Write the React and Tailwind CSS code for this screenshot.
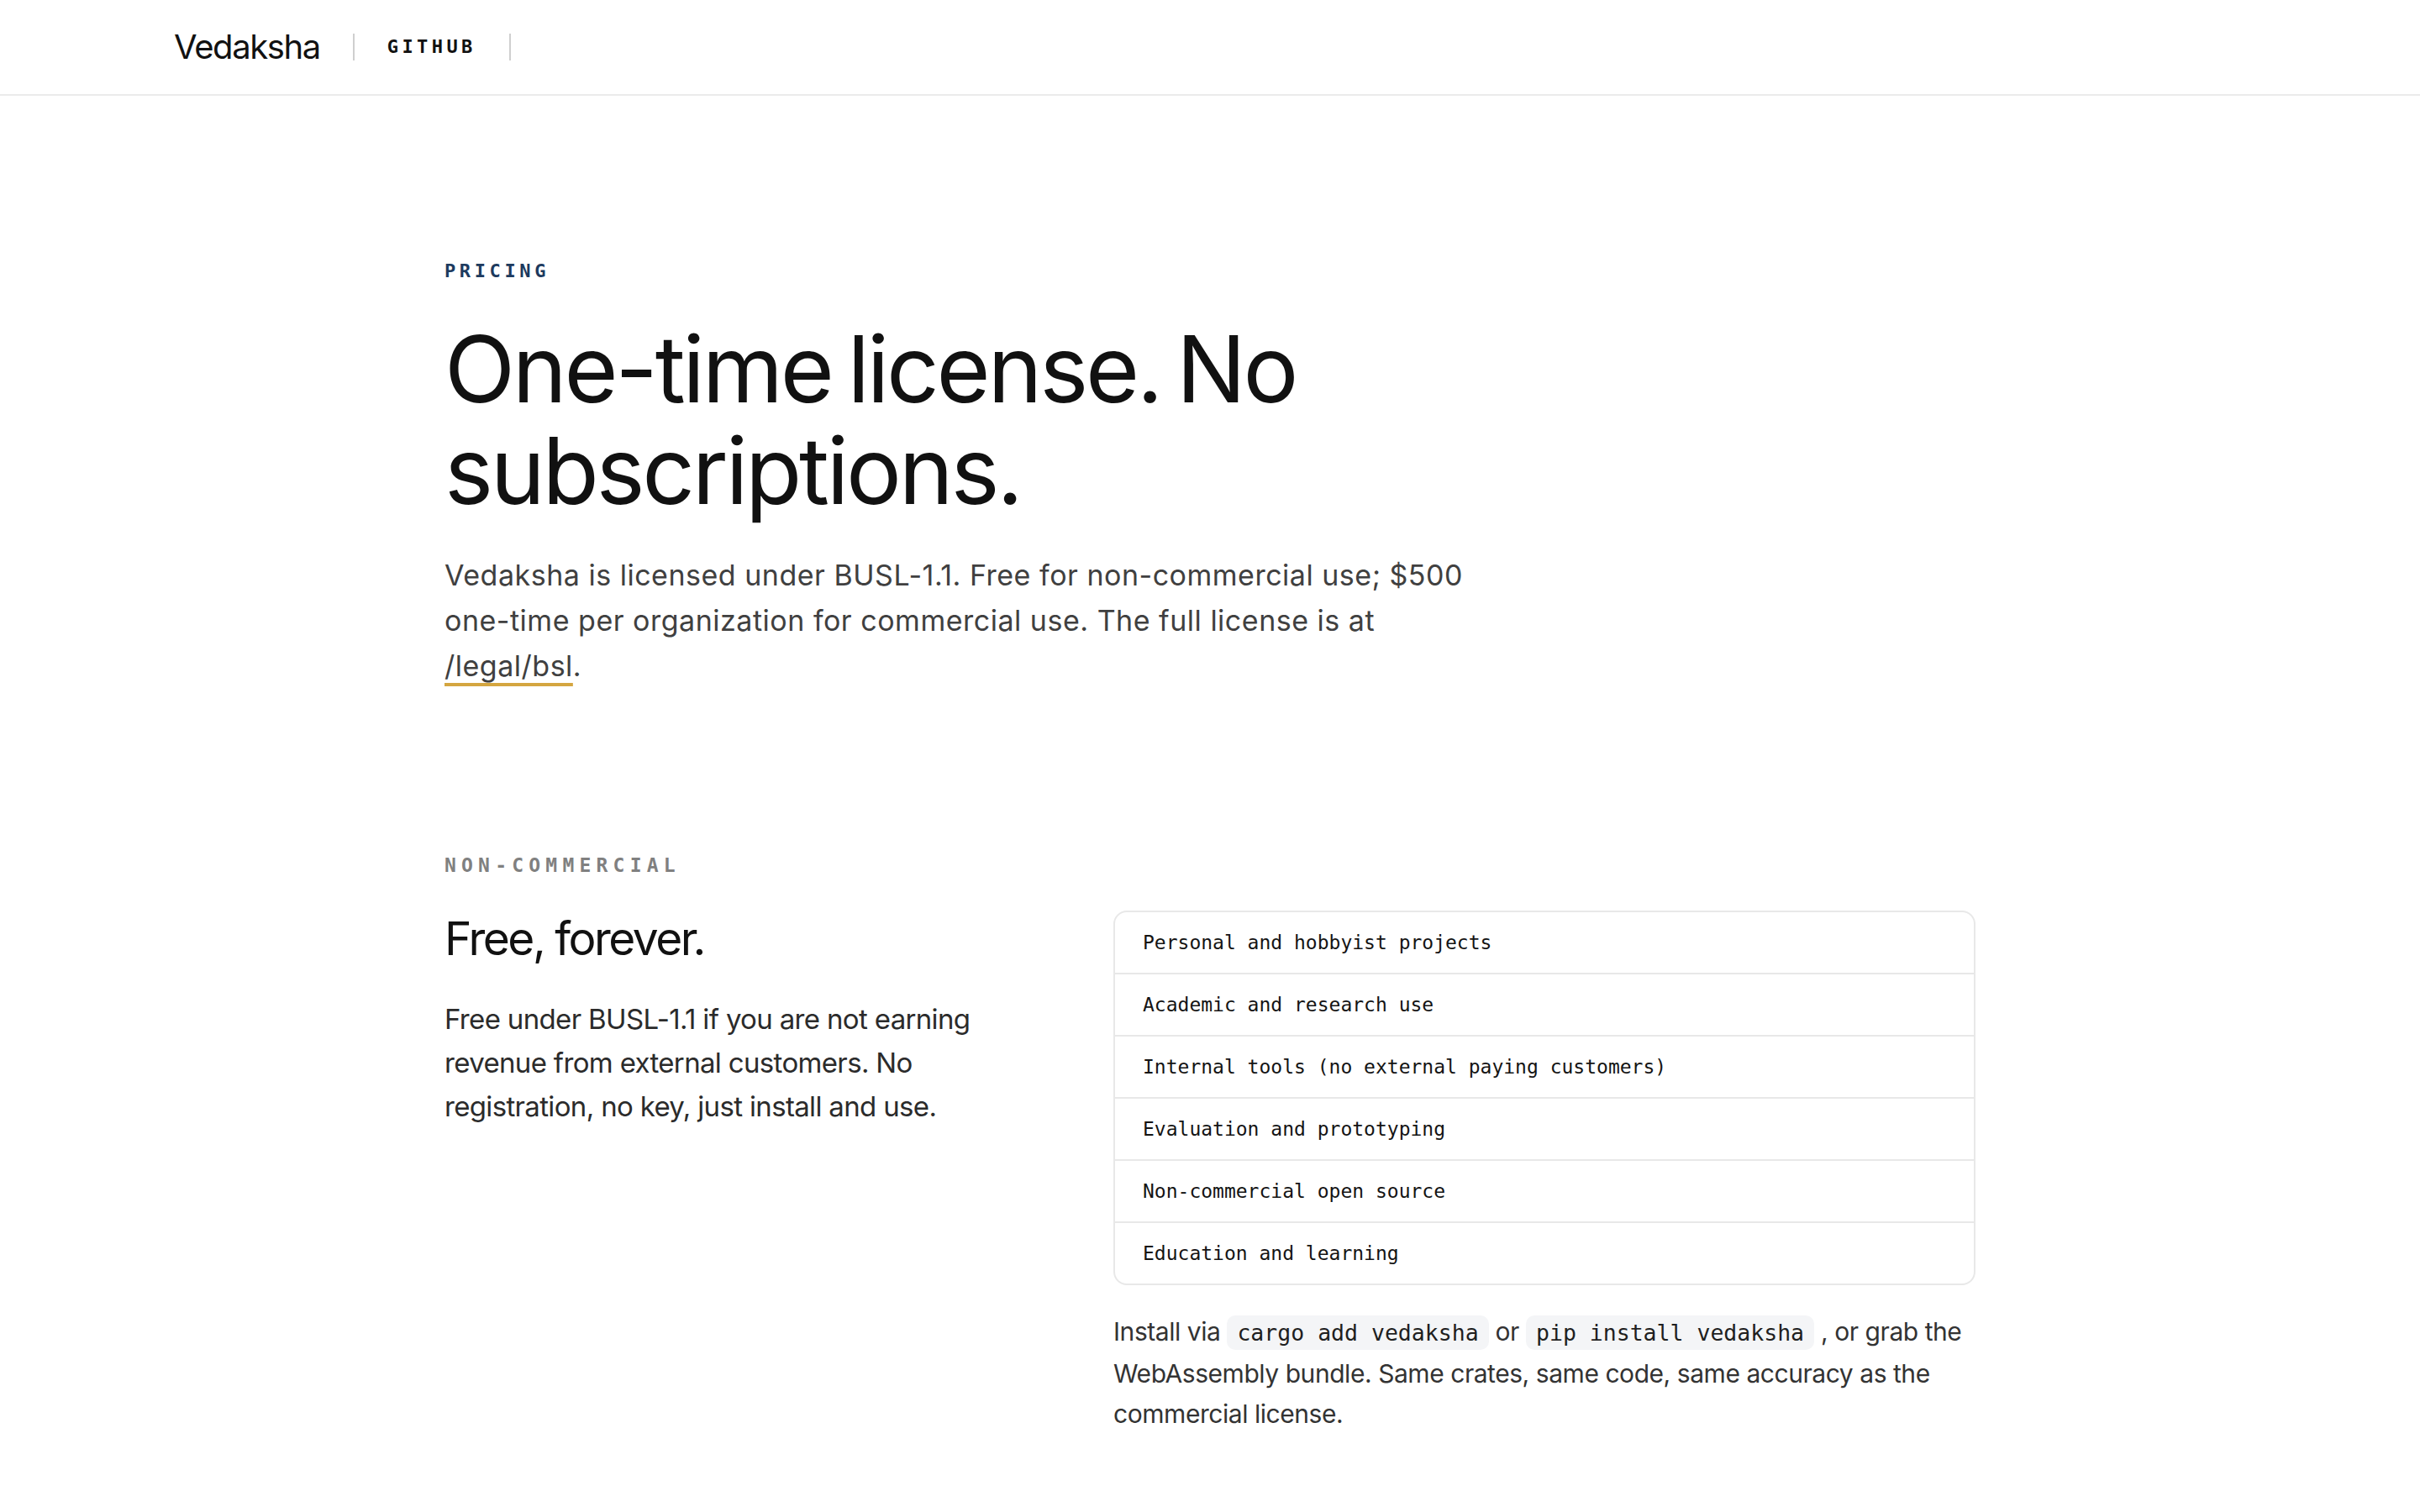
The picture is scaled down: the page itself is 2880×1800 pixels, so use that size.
import React from "react";

const sans = "font-['Inter','Liberation_Sans',sans-serif]";
const mono = "font-['DejaVu_Sans_Mono','Liberation_Mono',monospace]";

const freeUses = [
  "Personal and hobbyist projects",
  "Academic and research use",
  "Internal tools (no external paying customers)",
  "Evaluation and prototyping",
  "Non-commercial open source",
  "Education and learning",
];

const Code = ({ children }) => (
  <code
    className={`${mono} rounded-[10px] bg-[#f4f5f7] px-[12px] py-[5px] text-[26.5px] tracking-normal text-[#1f1f1f]`}
  >
    {children}
  </code>
);

const Divider = () => <span className="h-[32px] w-[2px] bg-[#cfcfcf]" />;

const Header = () => (
  <header className="flex h-[114px] items-center border-b-2 border-[#ebebeb] px-[207px]">
    <div className="flex items-center gap-[39px]">
      <a
        href="#"
        className={`${sans} text-[40px] leading-[48px] tracking-[-0.035em] text-[#111]`}
      >
        Vedaksha
      </a>
      <Divider />
      <a
        href="#"
        className={`${mono} text-[22px] font-bold leading-[28px] tracking-[0.2em] text-[#111]`}
      >
        GITHUB
      </a>
      <Divider />
    </div>
  </header>
);

const App = () => {
  return (
    <div className={`${sans} bg-white`}>
      <Header />

      <main className="mx-auto w-[1822px] pt-[195px] pb-[60px]">
        <section>
          <p
            className={`${mono} text-[22px] font-bold leading-[28px] tracking-[0.21em] text-[#1d3a5e]`}
          >
            PRICING
          </p>
          <h1 className="mt-[42px] max-w-[1260px] text-[110px] font-normal leading-[121px] tracking-[-0.03em] [word-spacing:-0.08em] text-[#111]">
            One-time license. No subscriptions.
          </h1>
          <p className="mt-[37px] max-w-[1260px] text-[34px] leading-[54px] tracking-[0.015em] text-[#404040]">
            Vedaksha is licensed under BUSL-1.1. Free for non-commercial use;
            $500 <span className="whitespace-nowrap">one-time</span> per
            organization for commercial use. The full license is at{" "}
            <a
              href="#"
              className="underline decoration-[#d4a640] decoration-[4px] underline-offset-[8px]"
            >
              /legal/bsl
            </a>
            .
          </p>
        </section>

        <section className="mt-[196px]">
          <p
            className={`${mono} text-[23px] font-bold leading-[28px] tracking-[0.27em] text-[#808080]`}
          >
            NON-COMMERCIAL
          </p>

          <div className="mt-[40px] grid grid-cols-[1fr_1026px] gap-[128px]">
            <div>
              <h2 className="text-[55px] font-normal leading-[67px] tracking-[-0.045em] text-[#111]">
                Free, forever.
              </h2>
              <p className="mt-[36px] text-[33px] leading-[52px] tracking-[-0.02em] text-[#2b2b2b]">
                Free under BUSL-1.1 if you are not earning revenue from external
                customers. No registration, no key, just install and use.
              </p>
            </div>

            <div>
              <ul className="overflow-hidden rounded-[16px] border-2 border-[#e8e8e8]">
                {freeUses.map((item, i) => (
                  <li
                    key={item}
                    className={`${mono} px-[33px] py-[19px] text-[23px] leading-[34px] text-[#141414] ${
                      i < freeUses.length - 1 ? "border-b-2 border-[#e8e8e8]" : ""
                    }`}
                  >
                    {item}
                  </li>
                ))}
              </ul>
              <p className="mt-[31px] text-[30px] leading-[48px] tracking-[-0.015em] text-[#333]">
                Install via <Code>cargo add vedaksha</Code> or{" "}
                <Code>pip install vedaksha</Code> , or grab the WebAssembly
                bundle. Same crates, same code, same accuracy as the commercial
                license.
              </p>
            </div>
          </div>
        </section>
      </main>
    </div>
  );
};

export default App;
